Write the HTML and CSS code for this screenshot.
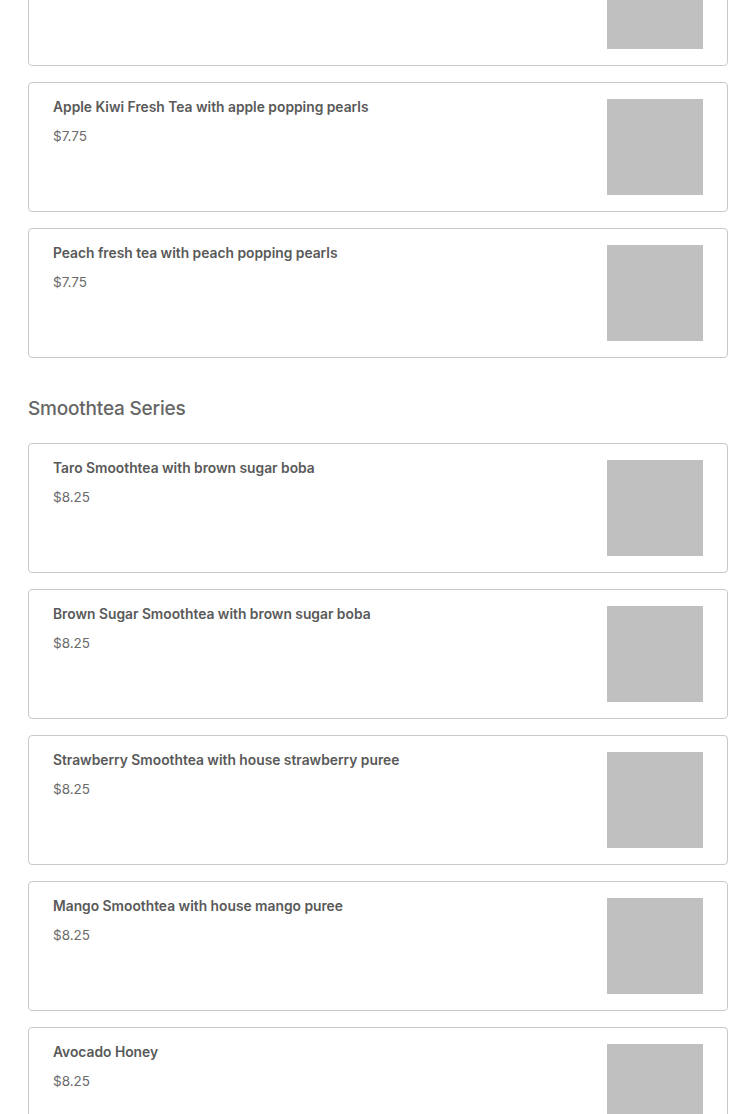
FILE: index.html
```html
<!DOCTYPE html>
<html>
<head>
<meta charset="utf-8">
<link rel="stylesheet" href="styles.css">
</head>
<body>
<main class="menu">
  <section class="section first">
    <div class="card">
      <div class="info"></div>
      <div class="thumb"></div>
    </div>
    <div class="card">
      <div class="info">
        <div class="name">Apple Kiwi Fresh Tea with apple popping pearls</div>
        <div class="price">$7.75</div>
      </div>
      <div class="thumb"></div>
    </div>
    <div class="card">
      <div class="info">
        <div class="name">Peach fresh tea with peach popping pearls</div>
        <div class="price">$7.75</div>
      </div>
      <div class="thumb"></div>
    </div>
  </section>
  <section class="section">
    <h2 class="section-title">Smoothtea Series</h2>
    <div class="card">
      <div class="info">
        <div class="name">Taro Smoothtea with brown sugar boba</div>
        <div class="price">$8.25</div>
      </div>
      <div class="thumb"></div>
    </div>
    <div class="card">
      <div class="info">
        <div class="name">Brown Sugar Smoothtea with brown sugar boba</div>
        <div class="price">$8.25</div>
      </div>
      <div class="thumb"></div>
    </div>
    <div class="card">
      <div class="info">
        <div class="name">Strawberry Smoothtea with house strawberry puree</div>
        <div class="price">$8.25</div>
      </div>
      <div class="thumb"></div>
    </div>
    <div class="card">
      <div class="info">
        <div class="name">Mango Smoothtea with house mango puree</div>
        <div class="price">$8.25</div>
      </div>
      <div class="thumb"></div>
    </div>
    <div class="card">
      <div class="info">
        <div class="name">Avocado Honey</div>
        <div class="price">$8.25</div>
      </div>
      <div class="thumb"></div>
    </div>
  </section>
</main>
</body>
</html>
```
FILE: styles.css
```css
html, body {
  margin: 0;
  padding: 0;
  background: #fff;
  overflow: hidden;
}
body {
  font-family: "Inter", "Lato", "Noto Sans", sans-serif;
  color: #555;
}
.menu {
  padding: 0 28px;
  margin-top: -64px;
}
.section {
  display: flex;
  flex-direction: column;
  gap: 16px;
}
.section-title {
  margin: 37px 0 4px;
  font-size: 19px;
  line-height: 28px;
  font-weight: 500;
  color: #666;
  letter-spacing: -0.2px;
}
.card {
  display: flex;
  justify-content: space-between;
  height: 128px;
  border: 1px solid #c9c9c9;
  border-radius: 4px;
}
.info {
  padding: 14px 24px;
}
.name {
  font-size: 13.8px;
  line-height: 20px;
  font-weight: 600;
  color: #595959;
}
.price {
  margin-top: 9px;
  font-size: 13.5px;
  line-height: 20px;
  color: #6a6a6a;
}
.thumb {
  width: 96px;
  height: 96px;
  margin: 16px 24px;
  background: #c0c0c0;
  flex-shrink: 0;
}
```
